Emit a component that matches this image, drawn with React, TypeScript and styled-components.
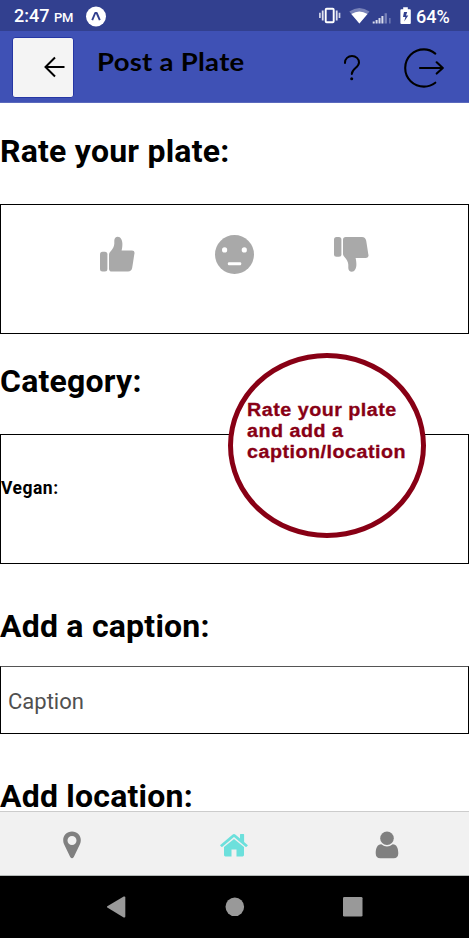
import React from "react";
import styled, { createGlobalStyle } from "styled-components";

const GlobalStyle = createGlobalStyle`
  * { box-sizing: border-box; }
  html, body { margin: 0; padding: 0; background: #fff; overflow: hidden; }
  svg { display: block; flex: none; }
`;

const Screen = styled.div`
  position: relative;
  display: flex;
  flex-direction: column;
  width: 469px;
  height: 938px;
  overflow: hidden;
  background: #fff;
  color: #000;
  font-family: Roboto, "Liberation Sans", sans-serif;
`;

const StatusBar = styled.div`
  display: flex;
  flex: none;
  align-items: center;
  height: 31px;
  padding: 1px 18px 0 14px;
  background: #32408f;
  color: #fff;
`;

const Clock = styled.span`
  font-size: 18px;
  line-height: 30px;
  font-weight: 500;
  margin: 2px 13px 0 0;
  white-space: nowrap;
  width: 59px;
`;

const Meridiem = styled.span`
  font-size: 13px;
  letter-spacing: -0.2px;
`;

const StatusIcons = styled.div`
  display: flex;
  align-items: center;
  margin-left: auto;
`;

const Battery = styled.span`
  width: 35px;
  margin-left: 4.5px;
  padding-top: 1px;
  font-size: 18px;
  line-height: 30px;
  font-weight: 500;
  letter-spacing: 0;
  white-space: nowrap;
`;

const Header = styled.header`
  display: flex;
  flex: none;
  height: 72px;
  padding: 6px 25.5px 0 12px;
  background: #3f51b5;
  border-bottom: 1px solid #5a69bd;
`;

const BackButton = styled.button`
  display: flex;
  align-items: center;
  justify-content: flex-end;
  width: 62px;
  height: 61px;
  padding: 0 8px 2px 0;
  border: 1px solid #2536a4;
  border-radius: 3px;
  background: #f4f4f4;
`;

const Title = styled.h1`
  flex: 1;
  margin: 8px 0 0 23px;
  font: 700 25px/32px Lato, "Open Sans", sans-serif;
  letter-spacing: 0.25px;
  white-space: nowrap;
  transform: scaleX(1.1);
  transform-origin: left;
`;

const HeaderActions = styled.div`
  display: flex;
  height: 61px;
  align-items: center;
  gap: 44px;
`;

const Content = styled.main`
  flex: 1;
  min-height: 0;
  overflow: hidden;
`;

const Heading = styled.h2<{ $height: number; $top: number }>`
  height: ${(p) => p.$height}px;
  margin: 0;
  padding-top: ${(p) => p.$top}px;
  font-size: 32px;
  line-height: 38px;
  font-weight: 700;
  letter-spacing: 0.22px;
  white-space: nowrap;
`;

const Panel = styled.section`
  height: 130px;
  border: 1px solid #000;
`;

const Ratings = styled(Panel)`
  display: flex;
  align-items: flex-start;
  justify-content: space-between;
  padding: 30px 99px 0 99px;
`;

const Option = styled.p`
  margin: 0;
  padding-top: 41px;
  font-size: 17.5px;
  line-height: 24px;
  font-weight: 700;
  letter-spacing: 0.5px;
`;

const CaptionInput = styled.input`
  display: block;
  width: 100%;
  height: 68px;
  padding: 2px 7px 0;
  border: 1px solid #000;
  border-top-color: #555;
  border-radius: 0;
  background: #fff;
  font: 400 22px Roboto, sans-serif;
  &::placeholder { color: #505050; opacity: 1; }
`;

const TabBar = styled.nav`
  display: grid;
  flex: none;
  grid-template-columns: 143px 181px 125px;
  align-items: center;
  justify-items: center;
  height: 65px;
  padding-top: 2px;
  background: #f1f1f1;
  border-top: 1px solid #ccc;
  border-bottom: 1px solid #b4b9b7;
`;

const SystemNav = styled.nav`
  display: grid;
  flex: none;
  grid-template-columns: repeat(3, 118px);
  justify-content: center;
  align-items: center;
  justify-items: center;
  height: 62px;
  background: #000;
`;

const Callout = styled.aside`
  position: absolute;
  left: 228px;
  top: 353px;
  width: 198px;
  height: 185px;
  padding: 42px 0 0 14px;
  border: 5px solid #880015;
  border-radius: 50%;
  background: #fff;
`;

const CalloutText = styled.p`
  margin: 0;
  color: #880015;
  font: 700 17.5px/21px "Liberation Sans", sans-serif;
  letter-spacing: 0.45px;
  white-space: nowrap;
  -webkit-text-stroke: 0.3px #880015;
  transform: scaleX(1.125);
  transform-origin: left;
`;

const Thumb = ({ down = false }: { down?: boolean }) => (
  <svg width="35" height="38" viewBox="0 -1.5 35 38" fill="#a9a9a9">
    <g transform={down ? "translate(0 35.2) scale(1 -1)" : "translate(0 .3)"}>
      <rect y="15" width="7.4" height="19.8" rx="2.5" />
      <path d="M9 18 Q9 16.2 10.3 15 C12.8 12.2 14.2 9.7 14.3 7 V3.8 C14.3 1.4 15.8 0 17.8 0 C20.7 0 22.4 3.5 22.4 7 C22.4 9.7 22.1 11.8 21.6 13.8 H32 Q34.8 13.8 34.5 16.4 L34.1 18.6 L33.8 20.8 L33.3 24 L33 26 L32.2 31 Q31.5 34.8 28 34.8 H11.8 Q9 34.8 9 32 Z" />
    </g>
  </svg>
);

export default function App() {
  return (
    <Screen>
      <GlobalStyle />
      <StatusBar>
        <Clock>2:47 <Meridiem>PM</Meridiem></Clock>
        <svg width="20" height="21" viewBox="0 0 20 21">
          <circle cx="10" cy="10.5" r="10" fill="#fff" />
          <path d="M6.2 14.2 L9.2 7 H10.7 L13.8 14.2" fill="none" stroke="#32408f" strokeWidth="1.9" strokeLinejoin="round" />
        </svg>
        <StatusIcons>
          <svg width="94" height="20" viewBox="318 6 94 20">
            <rect x="325.7" y="8.8" width="8" height="13.4" rx="1" fill="none" stroke="#fff" strokeWidth="1.9" />
            <path d="M322.7 10.5V20.5M336.7 10.5V20.5" stroke="#dfe2f0" strokeWidth="1.8" />
            <path d="M319.9 12.7V18M339.5 12.7V18" stroke="#cfd3e8" strokeWidth="1.7" />
            <path d="M349.3 11.5Q359.4 4.3 369.5 11.5L359.4 23.6Z" fill="#7882b8" />
            <path d="M351.3 14.1Q359.4 8.9 367.5 14.1L359.4 23.6Z" fill="#fff" />
            <path d="M372.7 21.5h2v2h-2zM375.6 20h2v3.5h-2zM378.5 18h2v5.5h-2zM381.4 16h2v7.5h-2z" fill="#d8dbec" />
            <path d="M384.6 13.2h2.3v10.3h-2.3zM389.2 18h1.3v5.5h-1.3z" fill="#7882b8" />
            <path d="M403.2 7.2h4.6v2h2q1 0 1 1V23q0 1-1 1h-8.4q-1 0-1-1V10.2q0-1 1-1h1.8z" fill="#fff" />
            <path d="M407.2 12H404L403 17H405.4L404.2 21.5L408.3 15.5H406Z" fill="#32408f" />
          </svg>
          <Battery>64%</Battery>
        </StatusIcons>
      </StatusBar>

      <Header>
        <BackButton aria-label="Back">
          <svg width="21" height="22" viewBox="0 0 21 22" fill="none" stroke="#000" strokeWidth="2">
            <path d="M20.5 11H1.8M11 1.5L1.5 11L11 20.5" />
          </svg>
        </BackButton>
        <Title>Post a Plate</Title>
        <HeaderActions>
          <svg width="16" height="26" viewBox="0 0 16 26" fill="none" stroke="#000" strokeWidth="2" strokeLinecap="round">
            <path d="M1 8V7.5C1 3.8 4 1 8 1S15 3.8 15 7.5C15 12.8 7.8 13.3 7.8 19" />
            <circle cx="7.7" cy="23.8" r="1.5" fill="#000" stroke="none" />
          </svg>
          <svg width="40" height="40" viewBox="0 0 40 40" fill="none" stroke="#000" strokeWidth="2.1" strokeLinecap="round" strokeLinejoin="round">
            <path d="M31.3 5.6C28 3 24 1.4 20 1.4C9.5 1.4 1.2 9.6 1.2 20S9.5 38.6 20 38.6C24 38.6 28 37.3 31.3 34.7" />
            <path d="M16 20H38.7M32.7 14.3L38.8 20L32.7 25.6" />
          </svg>
        </HeaderActions>
      </Header>

      <Content>
        <Heading $height={101} $top={29}>Rate your plate:</Heading>
        <Ratings>
          <Thumb />
          <svg width="39" height="39" viewBox="0 0 39 39">
            <circle cx="19.5" cy="19.5" r="19.5" fill="#a9a9a9" />
            <circle cx="9.6" cy="14.9" r="2.6" fill="#fff" />
            <circle cx="29.3" cy="14.9" r="2.6" fill="#fff" />
            <rect x="12.9" y="27.2" width="13.3" height="3" rx="1" fill="#fff" />
          </svg>
          <Thumb down />
        </Ratings>
        <Heading $height={100} $top={28}>Category:</Heading>
        <Panel>
          <Option>Vegan:</Option>
        </Panel>
        <Heading $height={102} $top={43}>Add a caption:</Heading>
        <CaptionInput placeholder="Caption" />
        <Heading $height={100} $top={43}>Add location:</Heading>
      </Content>

      <TabBar>
        <svg width="18" height="28" viewBox="0 0 18 28" fill="#808080">
          <path fillRule="evenodd" d="M9 .5C3.8.5.2 4.2.2 9C.2 10.8.6 12.1 1.2 13.4L7.2 26Q9 28.5 10.8 26L16.8 13.4C17.4 12.1 17.8 10.8 17.8 9C17.8 4.2 14.2.5 9 .5ZM9 5A4.5 4.5 0 1 1 9 14A4.5 4.5 0 1 1 9 5Z" />
        </svg>
        <svg width="28" height="24" viewBox="0 0 28 24" fill="#6ce0dc">
          <path d="M4 14.1L14 5.9L24 14.1V22Q24 23.4 22.6 23.4H16.5V16.5H11.5V23.4H5.4Q4 23.4 4 22Z" />
          <path d="M.3 12L12.4 1.7Q14 .5 15.6 1.7L20 5.4V1.5Q20 .9 20.6 .9H23.5Q24.1 .9 24.1 1.5V9L27.6 12Q28 12.4 27.6 12.8L26.5 13.8Q26 14.2 25.5 13.8L14 4.1L2.4 13.8Q1.9 14.2 1.4 13.8L.3 12.8Q0 12.4 .3 12Z" />
        </svg>
        <svg width="24" height="28" viewBox="0 0 24 28" fill="#808080">
          <circle cx="12" cy="7.2" r="6.8" />
          <path d="M6.3 13.3Q12 17.8 17.7 13.3C21.8 13.3 23.3 17.5 23.3 22.3C23.3 25.5 21.6 27.3 18.7 27.3H5.3C2.4 27.3.7 25.5.7 22.3C.7 17.5 2.2 13.3 6.3 13.3Z" />
        </svg>
      </TabBar>
      <SystemNav>
        <svg width="20" height="22" viewBox="0.5 0 20 22" fill="#999">
          <path d="M.8 10.2L17.2.6Q18.8 0 18.8 1.4V20.5Q18.8 22 17.2 21.4L.8 11.6Q0 10.9.8 10.2Z" />
        </svg>
        <svg width="20" height="20" viewBox="0 0 20 20" fill="#999">
          <circle cx="9.8" cy="9.8" r="9.3" />
        </svg>
        <svg width="20" height="20" viewBox="0.5 0 20 20" fill="#999">
          <rect x=".5" width="19.5" height="19.6" rx="1.3" />
        </svg>
      </SystemNav>

      <Callout>
        <CalloutText>
          Rate your plate<br />and add a<br />caption/location
        </CalloutText>
      </Callout>
    </Screen>
  );
}
